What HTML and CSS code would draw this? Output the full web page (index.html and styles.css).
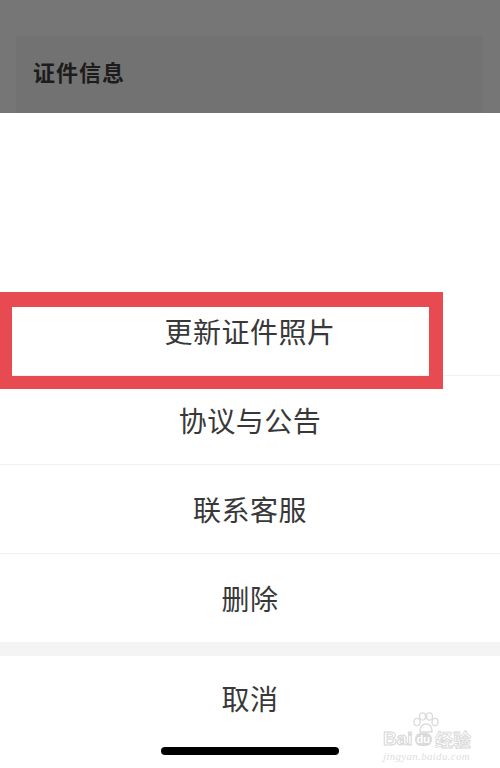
FILE: index.html
```html
<!DOCTYPE html>
<html lang="zh">
<head>
<meta charset="utf-8">
<link rel="stylesheet" href="styles.css">
</head>
<body>
<div class="screen">
  <div class="overlay">
    <div class="card"><span class="card-title">证件信息</span></div>
  </div>
  <div class="sheet">
    <div class="spacer"></div>
    <div class="item">更新证件照片</div>
    <div class="item">协议与公告</div>
    <div class="item">联系客服</div>
    <div class="item last">删除</div>
    <div class="gap"></div>
    <div class="item cancel">取消</div>
    <div class="home"><div class="home-bar"></div></div>
  </div>
  <div class="highlight"></div>
  <div class="watermark">
    <svg class="paw" width="26" height="22" viewBox="0 0 26 22">
      <g fill="#ffffff" stroke="#dcdcdc" stroke-width="1.4">
        <ellipse cx="4" cy="10" rx="3" ry="3.6"/>
        <ellipse cx="9.5" cy="4.5" rx="3" ry="3.6"/>
        <ellipse cx="16.5" cy="4.5" rx="3" ry="3.6"/>
        <ellipse cx="22" cy="10" rx="3" ry="3.6"/>
        <path d="M7 20 C7 14 10 12 13 12 C16 12 19 14 19 20 Z"/>
      </g>
    </svg>
    <div class="wm-row"><span class="wm-bai">Bai</span><span class="wm-du">du</span><span class="wm-jy">经验</span></div>
    <div class="wm-url">jingyan.baidu.com</div>
  </div>
</div>
</body>
</html>
```
FILE: styles.css
```css
html, body {
  margin: 0;
  padding: 0;
  background: #ffffff;
}
.screen {
  position: relative;
  width: 500px;
  height: 768px;
  overflow: hidden;
  font-family: "Noto Sans CJK SC", "Noto Sans", sans-serif;
}
.overlay {
  height: 113px;
  background: #767676;
  padding: 36px 17px 0 16px;
  box-sizing: border-box;
  display: flex;
}
.card {
  flex: 1;
  background: #727272;
  padding: 19px 0 0 17px;
  box-sizing: border-box;
}
.card-title {
  font-size: 22px;
  font-weight: 700;
  color: #1c1c1c;
  line-height: 32px;
  letter-spacing: 1px;
}
.sheet {
  display: flex;
  flex-direction: column;
  background: #ffffff;
}
.spacer {
  height: 174px;
}
.item {
  height: 88px;
  border-bottom: 1px solid #f2f2f2;
  display: flex;
  align-items: center;
  justify-content: center;
  font-size: 28px;
  color: #383838;
  letter-spacing: 0.5px;
}
.item.last {
  border-bottom: none;
}
.gap {
  height: 14px;
  background: #f4f4f4;
}
.item.cancel {
  border-bottom: none;
  height: 84px;
}
.home {
  display: flex;
  justify-content: center;
  padding-top: 7px;
}
.home-bar {
  width: 178px;
  height: 8px;
  border-radius: 4px;
  background: #000000;
}
.highlight {
  position: absolute;
  left: -2px;
  top: 292px;
  width: 445px;
  height: 97px;
  box-sizing: border-box;
  border: 14px solid #e84a52;
  border-top-width: 15px;
  border-bottom-width: 13px;
}
.watermark {
  position: absolute;
  left: 383px;
  top: 712px;
  width: 100px;
  color: #e2e2e2;
  font-family: "Liberation Sans", sans-serif;
}
.paw {
  position: absolute;
  left: 30px;
  top: 0;
}
.wm-row {
  display: flex;
  align-items: center;
  margin-top: 17px;
  line-height: 20px;
}
.wm-bai {
  font-size: 19px;
  font-weight: 700;
  color: #ffffff;
  -webkit-text-stroke: 1px #d6d6d6;
}
.wm-du {
  font-size: 11px;
  font-weight: 700;
  color: #ffffff;
  background: #dadada;
  border-radius: 6px;
  padding: 0 2px;
  line-height: 13px;
  margin: 0 3px 0 2px;
}
.wm-jy {
  font-family: "Noto Sans CJK SC", sans-serif;
  font-size: 18px;
  font-weight: 700;
  color: #ffffff;
  -webkit-text-stroke: 0.8px #d6d6d6;
}
.wm-url {
  font-family: "Liberation Serif", serif;
  font-style: italic;
  font-size: 11px;
  color: #e0e0e0;
  margin-top: 1px;
  letter-spacing: 0.3px;
}
```
